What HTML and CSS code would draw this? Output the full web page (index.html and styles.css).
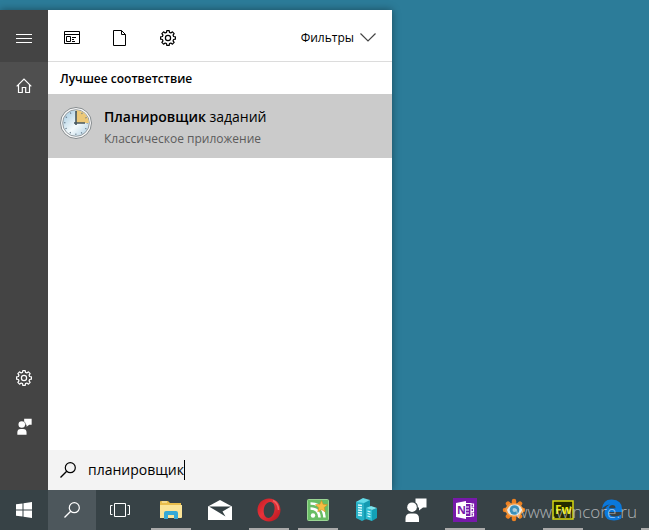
FILE: index.html
```html
<!DOCTYPE html>
<html lang="ru">

<head>
    <meta charset="UTF-8">
    <meta name="viewport" content="width=device-width, initial-scale=1.0">
    <title>Поиск</title>
    <link rel="stylesheet" href="styles.css">
</head>

<body>
    <!-- общие иконки -->
    <svg class="sprite">
        <symbol id="gear" viewBox="0 0 16 16">
            <path fill="none" stroke="currentColor" stroke-width="1.2" stroke-linejoin="round" d="M6.5 2.4 6.8.6 9.2.6 9.5 2.4 10.9 3 12.45 1.85 14.15 3.55 13 5.1 13.6 6.5 15.4 6.8 15.4 9.2 13.6 9.5 13 10.9 14.15 12.45 12.45 14.15 10.9 13 9.5 13.6 9.2 15.4 6.8 15.4 6.5 13.6 5.1 13 3.55 14.15 1.85 12.45 3 10.9 2.4 9.5.6 9.2.6 6.8 2.4 6.5 3 5.1 1.85 3.55 3.55 1.85 5.1 3Z" />
            <circle cx="8" cy="8" r="2.6" fill="none" stroke="currentColor" stroke-width="1.2" />
        </symbol>
        <symbol id="loupe" viewBox="0 0 16 16">
            <circle cx="10.3" cy="5.7" r="5" fill="none" stroke="currentColor" stroke-width="1.2" />
            <path d="M6.7 9.3.5 15.5" stroke="currentColor" stroke-width="1.3" />
        </symbol>
        <symbol id="person" viewBox="0 0 22 24">
            <circle cx="7" cy="9.2" r="4.8" />
            <path d="M.5 24v-3.500q0-5 5-5h3.500q5 0 5 5V24ZM10.500.500H21.500V9.500H18l-4 3V9.500h-1.200q.1-4-2.300-5Z" />
        </symbol>
    </svg>

    <main class="desktop">
        <section class="start">
            <nav class="side">
                <button class="menu" aria-label="Меню">
                    <svg width="16" height="9"><path d="M0 .5h16M0 4.500h16M0 8.500h16" stroke="#fff" /></svg>
                </button>
                <button class="active" aria-label="Главная">
                    <svg width="16" height="16" viewBox="0 0 16 16"><path d="M.7 8.300 8 1l7.300 7.300M2.500 6.700v7.800h3.800V9.500h3.400v5h3.800V6.700" fill="none" stroke="#fff" stroke-width="1.200" /></svg>
                </button>
                <button class="bottom" aria-label="Параметры"><svg width="16" height="16"><use href="#gear" /></svg></button>
                <button aria-label="Отзывы"><svg width="15" height="17" fill="#fff"><use href="#person" /></svg></button>
            </nav>

            <div class="results">
                <header class="filters">
                    <button aria-label="Приложения">
                        <svg width="16" height="14" fill="none" stroke="#000"><path d="M.5.5h15v12H.5ZM.5 3.500h15M2.500 5.500h4v5h-4ZM8 6.500h4M8 8.500h2M8 10.500h3" /></svg>
                    </button>
                    <button aria-label="Документы">
                        <svg width="14" height="16" fill="none" stroke="#000"><path d="M.5.5h8l4 4v11H.5ZM8.500.5v4h4" /></svg>
                    </button>
                    <button aria-label="Параметры"><svg width="16" height="16"><use href="#gear" /></svg></button>
                    <button class="more">Фильтры
                        <svg width="16" height="9" fill="none" stroke="#444" stroke-width="1.200"><path d="m.5.5 7.500 7.500L15.500.5" /></svg>
                    </button>
                </header>

                <h2>Лучшее соответствие</h2>
                <a class="item" href="#">
                    <svg width="34" height="34" viewBox="0 0 34 34">
                        <defs>
                            <linearGradient id="face" x1="0" y1="0" x2="1" y2="1">
                                <stop offset=".2" stop-color="#bcd8e8" />
                                <stop offset=".55" stop-color="#f4fafc" />
                                <stop offset="1" stop-color="#a9cbe0" />
                            </linearGradient>
                        </defs>
                        <circle cx="17" cy="17" r="15.500" fill="#f8f8f8" stroke="#858b8e" />
                        <circle cx="17" cy="17" r="13.300" fill="url(#face)" stroke="#969da1" />
                        <path d="M17 17V4.200A12.800 12.800 0 0 1 29.800 17Z" fill="#ecc878" />
                        <circle cx="17" cy="17" r="11.300" fill="none" stroke="#65798a" stroke-width="1.500" stroke-dasharray="1 4.917" stroke-dashoffset=".5" />
                        <path d="M17 5v14M15 17h11" fill="none" stroke="#45575f" stroke-width="1.600" />
                    </svg>
                    <div class="info">
                        <p class="name"><b>Планировщик</b> заданий</p>
                        <p class="type">Классическое приложение</p>
                    </div>
                </a>

                <label class="search">
                    <svg width="16" height="16"><use href="#loupe" /></svg>
                    <input type="text" value="планировщик" aria-label="Поиск">
                </label>
            </div>
        </section>
    </main>

    <footer class="taskbar">
        <button aria-label="Пуск">
            <svg width="16" height="16" fill="#fff"><path d="M0 2.300 6.500 1.400V7.500H0ZM7.500 1.200 16 0V7.500H7.500ZM0 8.500h6.500v6.100L0 13.700ZM7.500 8.500H16V16l-8.500-1.200Z" /></svg>
        </button>
        <button class="current" aria-label="Поиск"><svg width="16" height="16"><use href="#loupe" /></svg></button>
        <button aria-label="Просмотр задач">
            <svg width="20" height="16" fill="none" stroke="#fff"><path d="M4.500 1.500h11v13h-11ZM2.500 3.500h-2v9h2M17.500 3.500h2v9h-2" /></svg>
        </button>
        <div class="apps">
            <button class="open" aria-label="Проводник">
                <svg width="22" height="20" viewBox="0 0 22 20">
                    <path d="M0 18V2q0-1 1-1h7l2 2h11v15Z" fill="#e9bd4c" />
                    <path d="M0 18V5h22v12q0 1-1 1Z" fill="#fbe497" />
                    <path d="M2 2h5" stroke="#fff3c4" />
                    <path d="M4 19v-6q0-2 2-2h10q2 0 2 2v6h-4v-4H8v4Z" fill="#35a9d6" />
                </svg>
            </button>
            <button aria-label="Почта">
                <svg width="24" height="20" viewBox="0 0 24 20">
                    <path d="M0 6.500 12 0l12 6.500V20H0Z" fill="#fff" />
                    <path d="M1 6.500h22l-8.500 5 3 5L11 12.500Z" fill="#344044" />
                </svg>
            </button>
            <button class="open" aria-label="Opera">
                <svg width="24" height="24" viewBox="0 0 24 24">
                    <defs>
                        <linearGradient id="ring" x1="0" y1="0" x2="1" y2="1">
                            <stop offset="0" stop-color="#c41a22" />
                            <stop offset=".45" stop-color="#e8333a" />
                            <stop offset="1" stop-color="#b5141d" />
                        </linearGradient>
                    </defs>
                    <path fill="url(#ring)" fill-rule="evenodd" d="M12 .5C5.500.5.500 5.500.500 12s5 11.500 11.500 11.500S23.500 18.500 23.500 12 18.500.5 12 .5Zm1 3.500c3.500 0 5 3 4.500 7.500S14.500 20 11.500 20 6.500 17 6.700 12.500 9.500 4 13 4Z" />
                    <path d="M16 2.500q5.500 3 5.500 9.500" fill="none" stroke="#f0605f" stroke-width="1.500" />
                </svg>
            </button>
            <button class="open" aria-label="Ленты">
                <svg width="22" height="22" viewBox="0 0 22 22">
                    <rect x=".5" y=".5" width="21" height="21" rx="1" fill="#69bd65" stroke="#9bd694" />
                    <circle cx="6" cy="16.500" r="2.200" fill="#fff" />
                    <path d="M3.500 9.500q8.500 0 9 9M3.500 4.500q13 0 14 14" fill="none" stroke="#fff" stroke-width="2.600" />
                    <path d="m14.500 1.500 1.600 3.800 4.400.4-3.300 2.900 1 4.200-3.700-2.300-3.700 2.300 1-4.200-3.300-2.900 4.400-.4Z" fill="#f7bd43" stroke="#d58d1b" stroke-width=".6" />
                </svg>
            </button>
            <button aria-label="Серверы">
                <svg width="24" height="24" viewBox="0 0 24 24">
                    <path d="M1 4 9 1v21l-2 1-6-3Z" fill="#27b0c6" />
                    <path d="m9 4 6-2v18l-6 2Z" fill="#149bb2" />
                    <path d="M1 4 8 0l7 2-6 3Z" fill="#62dbe8" />
                    <path d="m3 7 4 .500m-4 2 4 .500m-4 2 4 .500m-4 2 4 .500m-4 2 4 .500" stroke="#d9fcff" stroke-width="1.400" />
                    <path d="m11 10 6 2v11l-6-2Z" fill="#2cbdd2" />
                    <path d="m17 12 5-2v10l-5 3Z" fill="#13a0b6" />
                    <path d="m11 10 5-2 6 2-5 2Z" fill="#7ce6f0" />
                    <path d="m12.500 13 3 1m-3 1.500 3 1m-3 1.500 3 1" stroke="#d9fcff" stroke-width="1.300" />
                </svg>
            </button>
            <button aria-label="Отзывы"><svg width="22" height="24" fill="#fff"><use href="#person" /></svg></button>
            <button class="open" aria-label="OneNote">
                <svg width="24" height="24" viewBox="0 0 24 24">
                    <path d="M0 0h24v24H0Z" fill="#7719aa" />
                    <path d="M12.500 5.500h5.500v13h-5.500M18 6h2.500v3H18m0 1.500h2.500v3H18m0 1.500h2.500v3H18M13 9h3M13 12h3M13 15h3" fill="none" stroke="#fff" stroke-width="1.200" />
                    <path d="m3 5 10-2v18L3 19Z" fill="#fff" />
                    <text class="note" x="4" y="16">N</text>
                </svg>
            </button>
            <button aria-label="Просмотр изображений">
                <svg width="24" height="24" viewBox="0 0 24 24">
                    <path d="M12 3v18M3 12h18M6 5.600l12 12.800M18 5.600 6 18.400" stroke="#ed8122" stroke-width="4.500" stroke-linecap="round" />
                    <path d="M3 12q2-7 9-7t10 7q-3 7-10 7t-9-7Z" fill="#f29a42" />
                    <path d="M5 12q2-5.500 8-5.500t7 5.500q-2 5.500-8 5.500T5 12Z" fill="#e3eaeb" />
                    <circle cx="12.500" cy="12" r="4.800" fill="#3b8fb9" />
                    <circle cx="12.500" cy="12" r="2" fill="#a9cddc" />
                </svg>
            </button>
            <button class="open" aria-label="Fireworks">
                <svg width="22" height="20" viewBox="0 0 22 20">
                    <path d="M1 1h20v18H1Z" fill="#242900" stroke="#d6d810" stroke-width="1.500" />
                    <text class="fw" x="3" y="14">Fw</text>
                </svg>
            </button>
            <button aria-label="Edge">
                <svg width="22" height="22" viewBox="0 0 22 22">
                    <path fill="#0a78dc" d="M1 10Q2 0 11 .5 21 1 21 10v3H8q.5 4.500 6 4.500 3.500 0 6-1.800v4Q17 21.500 13 21.500 4 21.500 3.500 14 3.500 8 9 5.500 3.500 6 1 10Zm7-.7h6.500Q14.500 6 11.500 6 8.500 6 8 9.300Z" />
                </svg>
            </button>
            <button class="open" aria-label="Приложение"></button>
        </div>
        <span class="mark">www.wincore.ru</span>
    </footer>
</body>

</html>
```

FILE: styles.css
```css
* {
    padding: 0;
    margin: 0;
    box-sizing: border-box;
}

body {
    min-height: 100vh;
    display: flex;
    flex-direction: column;
    background: #2c7c99;
    font-family: "Open Sans", "Noto Sans", sans-serif;
    color: #000;
}

.sprite {
    position: absolute;
    width: 0;
    height: 0;
}

button {
    display: flex;
    align-items: center;
    justify-content: center;
    border: none;
    background: none;
    font: inherit;
    color: inherit;
}

.desktop {
    flex: 1;
    display: flex;
    padding-top: 10px;
}

.start {
    width: 392px;
    display: flex;
    background: #fff;
    box-shadow: 0 0 8px rgba(0, 0, 0, 0.4);
}

/* левая панель */
.side {
    width: 48px;
    display: flex;
    flex-direction: column;
    padding-bottom: 40px;
    background: #444;
    color: #fff;
}

.side button {
    height: 48px;
}

.side .menu {
    height: 52px;
    padding-top: 4px;
}

.side .active {
    background: #4f4f4f;
}

.side .bottom {
    margin-top: auto;
}

.results {
    flex: 1;
    display: flex;
    flex-direction: column;
}

.filters {
    height: 52px;
    display: flex;
    padding-top: 4px;
    border-bottom: 1px solid #dcdcdc;
}

.filters button {
    width: 48px;
}

.filters .more {
    width: auto;
    margin-left: auto;
    margin-right: 16px;
    gap: 6px;
    font-size: 12px;
}

.results h2 {
    height: 32px;
    padding-left: 12px;
    font-size: 12px;
    font-weight: 600;
    line-height: 34px;
}

.item {
    height: 64px;
    display: flex;
    padding: 12px 11px;
    gap: 11px;
    background: #cbcbcb;
    color: #000;
    text-decoration: none;
}

.item .name {
    font-size: 14px;
    line-height: 22px;
}

.item .name b {
    font-weight: 600;
}

.item .type {
    color: #5c5c5c;
    font-size: 12px;
    line-height: 22px;
}

.search {
    height: 40px;
    display: flex;
    align-items: center;
    margin-top: auto;
    padding-left: 12px;
    gap: 12px;
    background: #f3f3f3;
}

.search input {
    field-sizing: content;
    height: 20px;
    border: none;
    border-right: 1px solid #000;
    outline: none;
    background: none;
    font: 14px/20px "Open Sans", "Noto Sans", sans-serif;
}

/* панель задач */
.taskbar {
    position: relative;
    height: 40px;
    display: flex;
    overflow: hidden;
    background: #374246;
    color: #fff;
}

.taskbar button {
    flex: none;
    width: 48px;
}

.taskbar .current {
    background: #4d575c;
}

.apps {
    flex: 1;
    min-width: 0;
    display: flex;
    overflow: hidden;
    gap: 1px;
    margin-left: 3px;
}

.apps .open {
    background: linear-gradient(#aaa, #aaa) no-repeat center bottom / 40px 2px;
}

.note {
    fill: #7719aa;
    font: bold 11px "Open Sans", sans-serif;
}

.fw {
    fill: #e4e612;
    font: bold 12px "Open Sans", sans-serif;
}

.mark {
    position: absolute;
    right: 12px;
    bottom: 6px;
    color: rgba(255, 255, 255, 0.6);
    font-size: 17px;
    font-weight: 300;
    line-height: 24px;
}
```
